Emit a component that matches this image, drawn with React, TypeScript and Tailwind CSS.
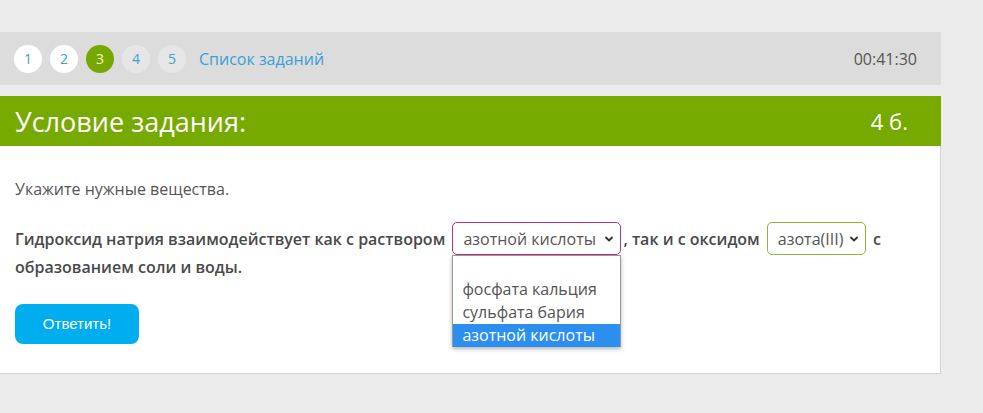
import React from "react";

function Chevron() {
  return (
    <svg width="10" height="10" viewBox="0 0 10 10" className="ml-auto">
      <path d="M2 3.5 L5 6.5 L8 3.5" fill="none" stroke="#333" strokeWidth="1.8" strokeLinecap="round" strokeLinejoin="round" />
    </svg>
  );
}

export default function App() {
  const circles = [
    { n: "1", cls: "bg-white text-[#3aa0d5]" },
    { n: "2", cls: "bg-white text-[#3aa0d5]" },
    { n: "3", cls: "bg-[#77a800] text-[#f2f7c8]" },
    { n: "4", cls: "bg-[#e6e6e6] text-[#3aa0d5]" },
    { n: "5", cls: "bg-[#e6e6e6] text-[#3aa0d5]" },
  ];
  return (
    <div className="w-[983px] h-[413px] bg-[#ebebeb] pt-[32px] overflow-hidden" style={{ fontFamily: '"Open Sans", sans-serif' }}>
      <div className="w-[941px]">
        <div className="h-[53px] bg-[#dcdcdc] flex items-center pl-[14px] pr-[24px]">
          <div className="flex gap-[8px]">
            {circles.map((c) => (
              <div key={c.n} className={`w-[28px] h-[28px] rounded-full flex items-center justify-center text-[14px] ${c.cls}`}>
                {c.n}
              </div>
            ))}
          </div>
          <span className="ml-[13px] text-[16px] text-[#3a9fd6]">Список заданий</span>
          <span className="ml-auto text-[16px] text-[#555]">00:41:30</span>
        </div>
        <div className="h-[11px]" />
        <div className="h-[50px] bg-[#77aa00] flex items-center justify-between pl-[15px] pr-[33px] text-white">
          <span className="text-[27px] leading-none">Условие задания:</span>
          <span className="text-[22px] leading-none">4 б.</span>
        </div>
        <div className="relative bg-white h-[228px] border-r border-b border-[#d4d4d4] px-[15px] pt-[32px]">
          <p className="text-[16px] leading-[22px] text-[#555]">Укажите нужные вещества.</p>
          <p className="mt-[25px] text-[16px] leading-[28px] font-semibold text-[#4a4a4a] pr-[40px]">
            Гидроксид натрия взаимодействует как с раствором{" "}
            <span className="relative top-[-2px] inline-flex align-middle my-[-5px] ml-[3px] mr-[2px] w-[169px] h-[33px] items-center border border-[#c2307c] rounded-[5px] pl-[10px] pr-[6px] font-normal text-[#555] text-[16px]">
              азотной кислоты
              <Chevron />
              <span className="absolute left-[-1px] top-[32px] w-[169px] h-[92px] bg-white border border-[#9a9a9a] shadow-[0_2px_4px_rgba(0,0,0,0.3)] flex flex-col text-[16px] leading-[23px] text-[#555] font-normal z-10">
                <span className="h-[22px] shrink-0 px-[9px]"></span>
                <span className="px-[9px]">фосфата кальция</span>
                <span className="px-[9px]">сульфата бария</span>
                <span className="px-[9px] bg-[#2c8ff0] text-white">азотной кислоты</span>
              </span>
            </span>
            , так и с оксидом{" "}
            <span className="relative top-[-2px] inline-flex align-middle my-[-5px] ml-[3px] mr-[3px] w-[99px] h-[33px] items-center border border-[#86b83c] rounded-[5px] pl-[10px] pr-[6px] font-normal text-[#555] text-[16px]">
              азота(III)
              <Chevron />
            </span>{" "}
            с образованием соли и воды.
          </p>
          <button className="mt-[23px] w-[124px] h-[40px] rounded-[8px] bg-[#00adef] text-white text-[15px]" style={{ fontFamily: '"Liberation Sans", Arial, sans-serif' }}>
            Ответить!
          </button>
        </div>
      </div>
    </div>
  );
}
